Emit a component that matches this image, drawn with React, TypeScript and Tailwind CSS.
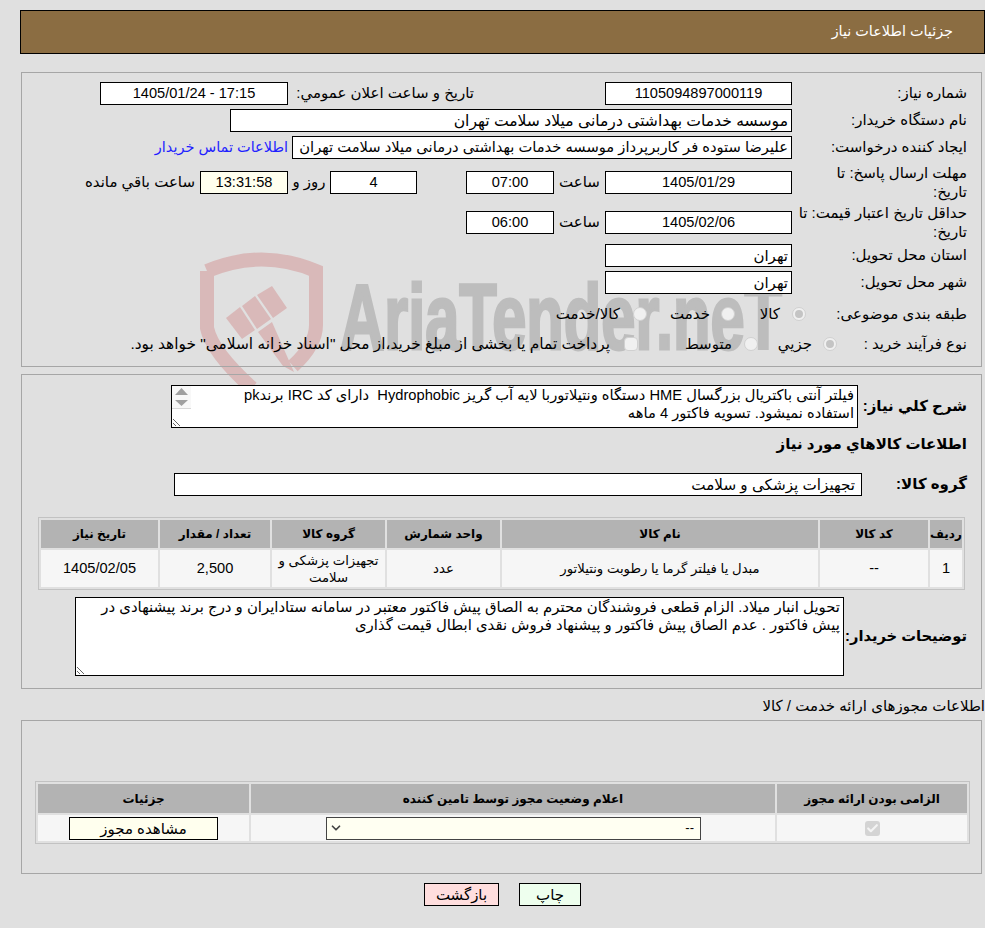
// App.tsx
import type { ReactNode } from 'react'
import { Check, ChevronDown } from 'lucide-react'

const FONT = 'font-["Liberation_Sans","DejaVu_Sans",sans-serif]'

function Field({ w, bg = 'bg-white', align = 'text-center', children }: { w: string; bg?: string; align?: string; children: ReactNode }) {
  return (
    <div className={`${w} ${bg} ${align} h-[23px] shrink-0 border border-black px-[3px] leading-[21px] whitespace-nowrap overflow-hidden`}>
      {children}
    </div>
  )
}

function Num({ w, bg, children }: { w: string; bg?: string; children: ReactNode }) {
  return <Field w={w} bg={bg} align="text-center text-[14.6px]">{children}</Field>
}

function Radio({ on = false, square = false }: { on?: boolean; square?: boolean }) {
  return (
    <span className={`flex h-[14px] w-[14px] shrink-0 items-center justify-center border border-[#d0d0d0] bg-[#f0f0f0] ${square ? 'rounded-[4px]' : 'rounded-full'}`}>
      {on && <span className="h-[8px] w-[8px] rounded-full bg-[#c4c4c4]" />}
    </span>
  )
}

function Watermark() {
  return (
    <svg dir="ltr" className="absolute left-0 top-0 h-[928px] w-[985px]" viewBox="0 0 985 928" fill="none">
      <path d="M207 271 Q262 248 316 271 V325 Q316 345 293 366 M207 271 V328 Q212 352 252 388" stroke="#d9b9b9" strokeWidth="14" />
      <polygon points="226,318 240,307 255,330 242,339" fill="#d9b9b9" />
      <polygon points="242,306 255,296 271,319 257,329" fill="#d9b9b9" />
      <polygon points="257,295 272,286 287,308 273,318" fill="#d9b9b9" />
      <polygon points="258,332 272,322 294,372 283,366" fill="#d9b9b9" />
      <text x="340" y="349" direction="ltr" fontFamily="Liberation Sans" fontWeight="700" fontSize="92" fill="#bdbdbd" stroke="#bdbdbd" strokeWidth="3" textLength="442" lengthAdjust="spacingAndGlyphs">AriaTender.neT</text>
    </svg>
  )
}

const ITEM_COLS = ['w-[32px]', 'w-[108px]', 'w-[316px]', 'w-[113px]', 'w-[113px]', 'w-[110px]', 'w-[117px]']
const ITEM_HEAD = ['ردیف', 'کد کالا', 'نام کالا', 'واحد شمارش', 'گروه کالا', 'تعداد / مقدار', 'تاریخ نیاز']

export default function App() {
  return (
    <div dir="rtl" className={`relative h-[928px] w-[985px] overflow-hidden bg-[#e0e0e0] text-[15px] text-black ${FONT}`}>
      <Watermark />

      <div className="relative pt-[10px]">
        {/* Header */}
        <div className="ml-[20px] flex h-[44px] items-center border border-black bg-[#8b6d42] pr-[31px] text-[14.4px] text-white">
          جزئیات اطلاعات نیاز
        </div>

        {/* Main info */}
        <div className="ml-[21px] mr-[3px] mt-[18px] h-[295px] border border-[#a6a6a6] pr-[14px] pt-[9px]">
          <div className="flex h-[23px] items-center">
            <span className="w-[175px] shrink-0">شماره نیاز:</span>
            <Num w="w-[187px]">1105094897000119</Num>
            <span className="mr-[131px] w-[186px] shrink-0 whitespace-nowrap">تاریخ و ساعت اعلان عمومي:</span>
            <Num w="w-[188px]">17:15 - 1405/01/24</Num>
          </div>
          <div className="mt-[4px] flex h-[23px] items-center">
            <span className="w-[175px] shrink-0">نام دستگاه خریدار:</span>
            <Field w="w-[562px]" align="text-right text-[15.6px]">موسسه خدمات بهداشتی درمانی میلاد سلامت تهران</Field>
          </div>
          <div className="mt-[4px] flex h-[23px] items-center">
            <span className="w-[175px] shrink-0 whitespace-nowrap">ایجاد کننده درخواست:</span>
            <Field w="w-[500px]" align="text-right text-[14.7px]">علیرضا ستوده فر کاربرپرداز موسسه خدمات بهداشتی درمانی میلاد سلامت تهران</Field>
            <a href="#" className="mr-[4px] whitespace-nowrap text-[14.5px] text-[#1f1fff]">اطلاعات تماس خریدار</a>
          </div>
          <div className="mt-[4px] flex h-[38px] items-center">
            <span className="w-[175px] shrink-0 leading-[19px]">مهلت ارسال پاسخ: تا<br />تاریخ:</span>
            <Num w="w-[187px]">1405/01/29</Num>
            <span className="w-[51px] shrink-0 text-center">ساعت</span>
            <Num w="w-[88px]">07:00</Num>
            <span className="w-[49px] shrink-0" />
            <Num w="w-[87px]">4</Num>
            <span className="w-[42px] shrink-0 text-center">روز و</span>
            <Num w="w-[88px]" bg="bg-[#ffffee]">13:31:58</Num>
            <span className="mr-[5px] whitespace-nowrap">ساعت باقي مانده</span>
          </div>
          <div className="mt-[2px] flex h-[38px] items-center">
            <span className="w-[175px] shrink-0 whitespace-nowrap leading-[19px]">حداقل تاریخ اعتبار قیمت: تا<br />تاریخ:</span>
            <Num w="w-[187px]">1405/02/06</Num>
            <span className="w-[51px] shrink-0 text-center">ساعت</span>
            <Num w="w-[88px]">06:00</Num>
          </div>
          <div className="mt-[3px] flex h-[23px] items-center">
            <span className="w-[175px] shrink-0">استان محل تحویل:</span>
            <Field w="w-[187px]" align="text-right">تهران</Field>
          </div>
          <div className="mt-[4px] flex h-[23px] items-center">
            <span className="w-[175px] shrink-0">شهر محل تحویل:</span>
            <Field w="w-[187px]" align="text-right">تهران</Field>
          </div>
          <div className="mt-[8px] flex h-[24px] items-center">
            <span className="w-[161px] shrink-0 whitespace-nowrap">طبقه بندی موضوعی:</span>
            <Radio on />
            <span className="mr-[12px] w-[45px] shrink-0">کالا</span>
            <Radio />
            <span className="mr-[11px] w-[63px] shrink-0">خدمت</span>
            <Radio />
            <span className="mr-[13px] whitespace-nowrap">کالا/خدمت</span>
          </div>
          <div className="mt-[6px] flex h-[24px] items-center">
            <span className="w-[130px] shrink-0 whitespace-nowrap">نوع فرآیند خرید :</span>
            <Radio on />
            <span className="mr-[11px] w-[54px] shrink-0">جزیي</span>
            <Radio />
            <span className="mr-[12px] w-[94px] shrink-0">متوسط</span>
            <Radio square />
            <span className="mr-[14px] whitespace-nowrap text-[15.4px]">پرداخت تمام یا بخشی از مبلغ خرید،از محل "اسناد خزانه اسلامی" خواهد بود.</span>
          </div>
        </div>

        {/* Description and items */}
        <div className="ml-[21px] mr-[3px] mt-[7px] h-[315px] border border-[#a6a6a6] pr-[14px] pt-[10px]">
          <div className="flex items-center">
            <span className="w-[109px] shrink-0 whitespace-nowrap font-bold">شرح کلي نیاز:</span>
            <div className="relative h-[43px] w-[687px] shrink-0">
              <textarea
                readOnly
                className="block h-[43px] w-[687px] border border-black bg-white px-[3px] pl-[22px] text-[14.7px] leading-[18px] outline-none"
                defaultValue={'فیلتر آنتی باکتریال بزرگسال HME دستگاه ونتیلاتوربا لایه آب گریز Hydrophobic  دارای کد IRC برندpk\nاستفاده نمیشود. تسویه فاکتور 4 ماهه'}
              />
              {/* scrollbar arrows */}
              <div className="absolute left-[1px] top-[1px] h-[23px] w-[19px] border-b border-[#d8d8d8] bg-[#f8f8f8]">
                <svg width="19" height="23" viewBox="0 0 19 23" fill="#a0a0a0">
                  <polygon points="9.5,2 3,9 16,9" />
                  <polygon points="3,14 16,14 9.5,20" />
                </svg>
              </div>
            </div>
          </div>
          <div className="mt-[5px] h-[24px] font-bold leading-[22px]">اطلاعات کالاهاي مورد نیاز</div>
          <div className="mt-[16px] flex items-center">
            <span className="w-[105px] shrink-0 font-bold">گروه کالا:</span>
            <Field w="w-[688px]" align="text-right pr-[6px] text-[15.2px]">تجهیزات پزشکی و سلامت</Field>
          </div>
          <table className="mr-[2px] mt-[21px] w-[927px] table-fixed border-separate border-spacing-[2px] border border-[#c2c2c2] text-center text-[13.25px]">
            <colgroup>
              {ITEM_COLS.map((c, i) => <col key={i} className={c} />)}
            </colgroup>
            <thead>
              <tr className="h-[28px] bg-[#b3b3b3]">
                {ITEM_HEAD.map(h => (
                  <th key={h} className="overflow-hidden whitespace-nowrap p-0 text-[12px] font-bold">{h}</th>
                ))}
              </tr>
            </thead>
            <tbody>
              <tr className="h-[37px] bg-[#f6f6f6]">
                <td className="p-0 text-[14.6px]">1</td>
                <td className="p-0 text-[14.6px]">--</td>
                <td className="p-0">مبدل یا فیلتر گرما یا رطوبت ونتیلاتور</td>
                <td className="p-0">عدد</td>
                <td className="p-0 leading-[17px]">تجهیزات پزشکی و سلامت</td>
                <td className="p-0 text-[14.6px]">2,500</td>
                <td className="p-0 text-[14.6px]">1405/02/05</td>
              </tr>
            </tbody>
          </table>
          <div className="mt-[7px] flex items-center">
            <span className="w-[123px] shrink-0 whitespace-nowrap text-[14.7px] font-bold">توضیحات خریدار:</span>
            <textarea
              readOnly
              className="h-[79px] w-[769px] shrink-0 border border-black bg-white px-[3px] py-0 text-[14.9px] leading-[18px] outline-none"
              defaultValue={'تحویل انبار میلاد. الزام قطعی فروشندگان محترم به الصاق پیش فاکتور معتبر در سامانه ستادایران و درج برند پیشنهادی در\nپیش فاکتور . عدم الصاق پیش فاکتور و پیشنهاد فروش نقدی ابطال قیمت گذاری'}
            />
          </div>
        </div>

        <div className="flex h-[31px] items-center whitespace-nowrap pt-[3px]">اطلاعات مجوزهای ارائه خدمت / کالا</div>

        {/* Permits */}
        <div className="ml-[21px] mr-[3px] h-[154px] border border-[#a6a6a6] pt-[60px]">
          <table className="mr-[11px] w-[935px] table-fixed border-separate border-spacing-[2px] border border-[#c2c2c2] text-center text-[12px]">
            <colgroup>
              <col className="w-[190px]" />
              <col className="w-[524px]" />
              <col className="w-[211px]" />
            </colgroup>
            <thead>
              <tr className="h-[29px] bg-[#b3b3b3]">
                <th className="p-0 font-bold">الزامی بودن ارائه مجوز</th>
                <th className="p-0 font-bold">اعلام وضعیت مجوز توسط تامین کننده</th>
                <th className="p-0 font-bold">جزئیات</th>
              </tr>
            </thead>
            <tbody>
              <tr className="h-[26px] bg-[#f6f6f6]">
                <td className="p-0">
                  <span className="mx-auto flex h-[15px] w-[15px] items-center justify-center rounded-[3px] bg-[#d4d4d4]">
                    <Check size={13} strokeWidth={4} className="text-[#f4f4f4]" />
                  </span>
                </td>
                <td className="p-0">
                  <div className="relative mr-[74px] h-[23px] w-[375px]">
                    <select className="block h-[23px] w-[375px] appearance-none border border-[#444] bg-[#fffff2] pr-[6px] text-[13px]">
                      <option>--</option>
                    </select>
                    <ChevronDown size={14} strokeWidth={3} className="pointer-events-none absolute left-[3px] top-[4px] text-[#444]" />
                  </div>
                </td>
                <td className="p-0">
                  <button className="h-[23px] w-[149px] border border-black bg-[#ffffee] text-[15px] leading-[21px]">مشاهده مجوز</button>
                </td>
              </tr>
            </tbody>
          </table>
        </div>

        <div className="mt-[9px] flex justify-center gap-[20px] pl-[20px]">
          <button className="h-[23px] w-[62px] border border-black bg-[#eeffee] leading-[21px]">چاپ</button>
          <button className="h-[23px] w-[75px] border border-black bg-[#ffdede] leading-[21px]">بازگشت</button>
        </div>
      </div>
    </div>
  )
}
